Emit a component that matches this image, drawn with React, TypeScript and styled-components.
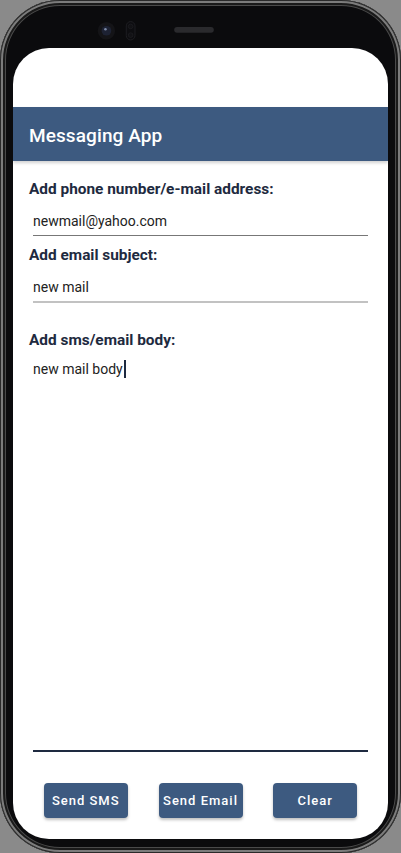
import React from 'react';
import styled, { createGlobalStyle } from 'styled-components';

const GlobalStyle = createGlobalStyle`
	html, body {
		margin: 0;
		padding: 0;
		background: #8a8a8a;
	}
	body {
		font-family: Roboto, "Noto Sans", "Liberation Sans", sans-serif;
	}
	* { box-sizing: border-box; }
`;

const Phone = styled.div`
	width: 401px;
	height: 853px;
	display: flex;
	flex-direction: column;
	padding: 0 13px 14px;
	border-radius: 60px;
	background: #0b0b0d;
	box-shadow:
		inset 0 0 0 1px #2a2a2a,
		inset 0 0 0 3px #7c7c7c,
		inset 0 0 0 5px #1a1a1a,
		inset 0 0 0 6px #4a4a4a;
`;

const TopBezel = styled.div`
	height: 48px;
	flex: none;
	display: flex;
	svg { display: block; margin-left: -13px; }
`;

const Screen = styled.div`
	flex: 1;
	display: flex;
	flex-direction: column;
	background: #ffffff;
	border-radius: 36px;
	overflow: hidden;
`;

const StatusArea = styled.div`
	height: 59px;
	flex: none;
`;

const AppBar = styled.header`
	height: 54px;
	flex: none;
	display: flex;
	align-items: center;
	padding: 3px 16px 0;
	background: #3d5a80;
	box-shadow: 0 2px 3px rgba(0, 0, 0, 0.18);
	position: relative;
	z-index: 1;
`;

const Title = styled.h1`
	margin: 0;
	font-size: 19px;
	font-weight: 500;
	color: #ffffff;
	letter-spacing: 0.1px;
`;

const Content = styled.main`
	flex: 1;
	display: flex;
	flex-direction: column;
	padding: 18px 16px 0;
`;

const Label = styled.label<{ $gap?: number }>`
	display: block;
	margin-top: ${({ $gap }) => $gap ?? 0}px;
	font-size: 15.4px;
	line-height: 20px;
	font-weight: 700;
	color: #1e2a40;
`;

const TextInput = styled.input<{ $gap: number; $line: string; $weight: number }>`
	display: block;
	width: calc(100% - 8px);
	height: 30px;
	margin: ${({ $gap }) => $gap}px 4px 0;
	padding: 0;
	border: none;
	border-bottom: ${({ $weight, $line }) => `${$weight}px solid ${$line}`};
	outline: none;
	background: transparent;
	font-family: inherit;
	font-size: 14px;
	color: #222222;
`;

const BodyField = styled.div`
	flex: 1;
	margin: 5px 4px 0;
	padding: 4px 0;
	font-size: 14px;
	line-height: 20px;
	color: #222222;
	border-bottom: 2px solid #1e2a40;
`;

const Caret = styled.span`
	display: inline-block;
	width: 2px;
	height: 18px;
	margin-left: 1px;
	vertical-align: -4px;
	background: #1e2a40;
`;

const Actions = styled.div`
	display: flex;
	justify-content: space-evenly;
	padding: 31px 0 21px;
	margin: 0 -16px;
`;

const ActionButton = styled.button`
	width: 84px;
	height: 35px;
	padding: 0;
	border: none;
	border-radius: 4px;
	background: #3d5a80;
	color: #ffffff;
	font-family: inherit;
	font-size: 13px;
	font-weight: 500;
	letter-spacing: 1px;
	box-shadow: 0 2px 3px rgba(0, 0, 0, 0.25);
	cursor: pointer;
`;

const BezelDrawing = () => (
	<svg width="401" height="48" viewBox="0 0 401 48">
		<circle cx="110" cy="31" r="9" fill="#141417" />
		<circle cx="110" cy="31" r="5" fill="#1d2233" />
		<circle cx="109" cy="29.5" r="1.3" fill="#7d8aa8" />
		<rect x="130.5" y="21.5" width="9" height="19" rx="4.5" fill="#0d0d10" stroke="#1e1e22" />
		<circle cx="135" cy="26.5" r="2.4" fill="#121215" stroke="#1e1e22" strokeWidth="0.8" />
		<circle cx="135" cy="35.5" r="2.4" fill="#121215" stroke="#1e1e22" strokeWidth="0.8" />
		<rect x="180" y="27" width="41" height="6" rx="3" fill="#2a2a2d" />
	</svg>
);

export default function App() {
	return (
		<>
			<GlobalStyle />
			<Phone>
				<TopBezel>
					<BezelDrawing />
				</TopBezel>
				<Screen>
					<StatusArea />
					<AppBar>
						<Title>Messaging App</Title>
					</AppBar>
					<Content>
						<Label>Add phone number/e-mail address:</Label>
						<TextInput $gap={7} $line="#777777" $weight={1} defaultValue="newmail@yahoo.com" readOnly />
						<Label $gap={9}>Add email subject:</Label>
						<TextInput $gap={8} $line="#c2c2c2" $weight={2} defaultValue="new mail" readOnly />
						<Label $gap={27}>Add sms/email body:</Label>
						<BodyField>
							new mail body<Caret />
						</BodyField>
						<Actions>
							<ActionButton>Send SMS</ActionButton>
							<ActionButton>Send Email</ActionButton>
							<ActionButton>Clear</ActionButton>
						</Actions>
					</Content>
				</Screen>
			</Phone>
		</>
	);
}
